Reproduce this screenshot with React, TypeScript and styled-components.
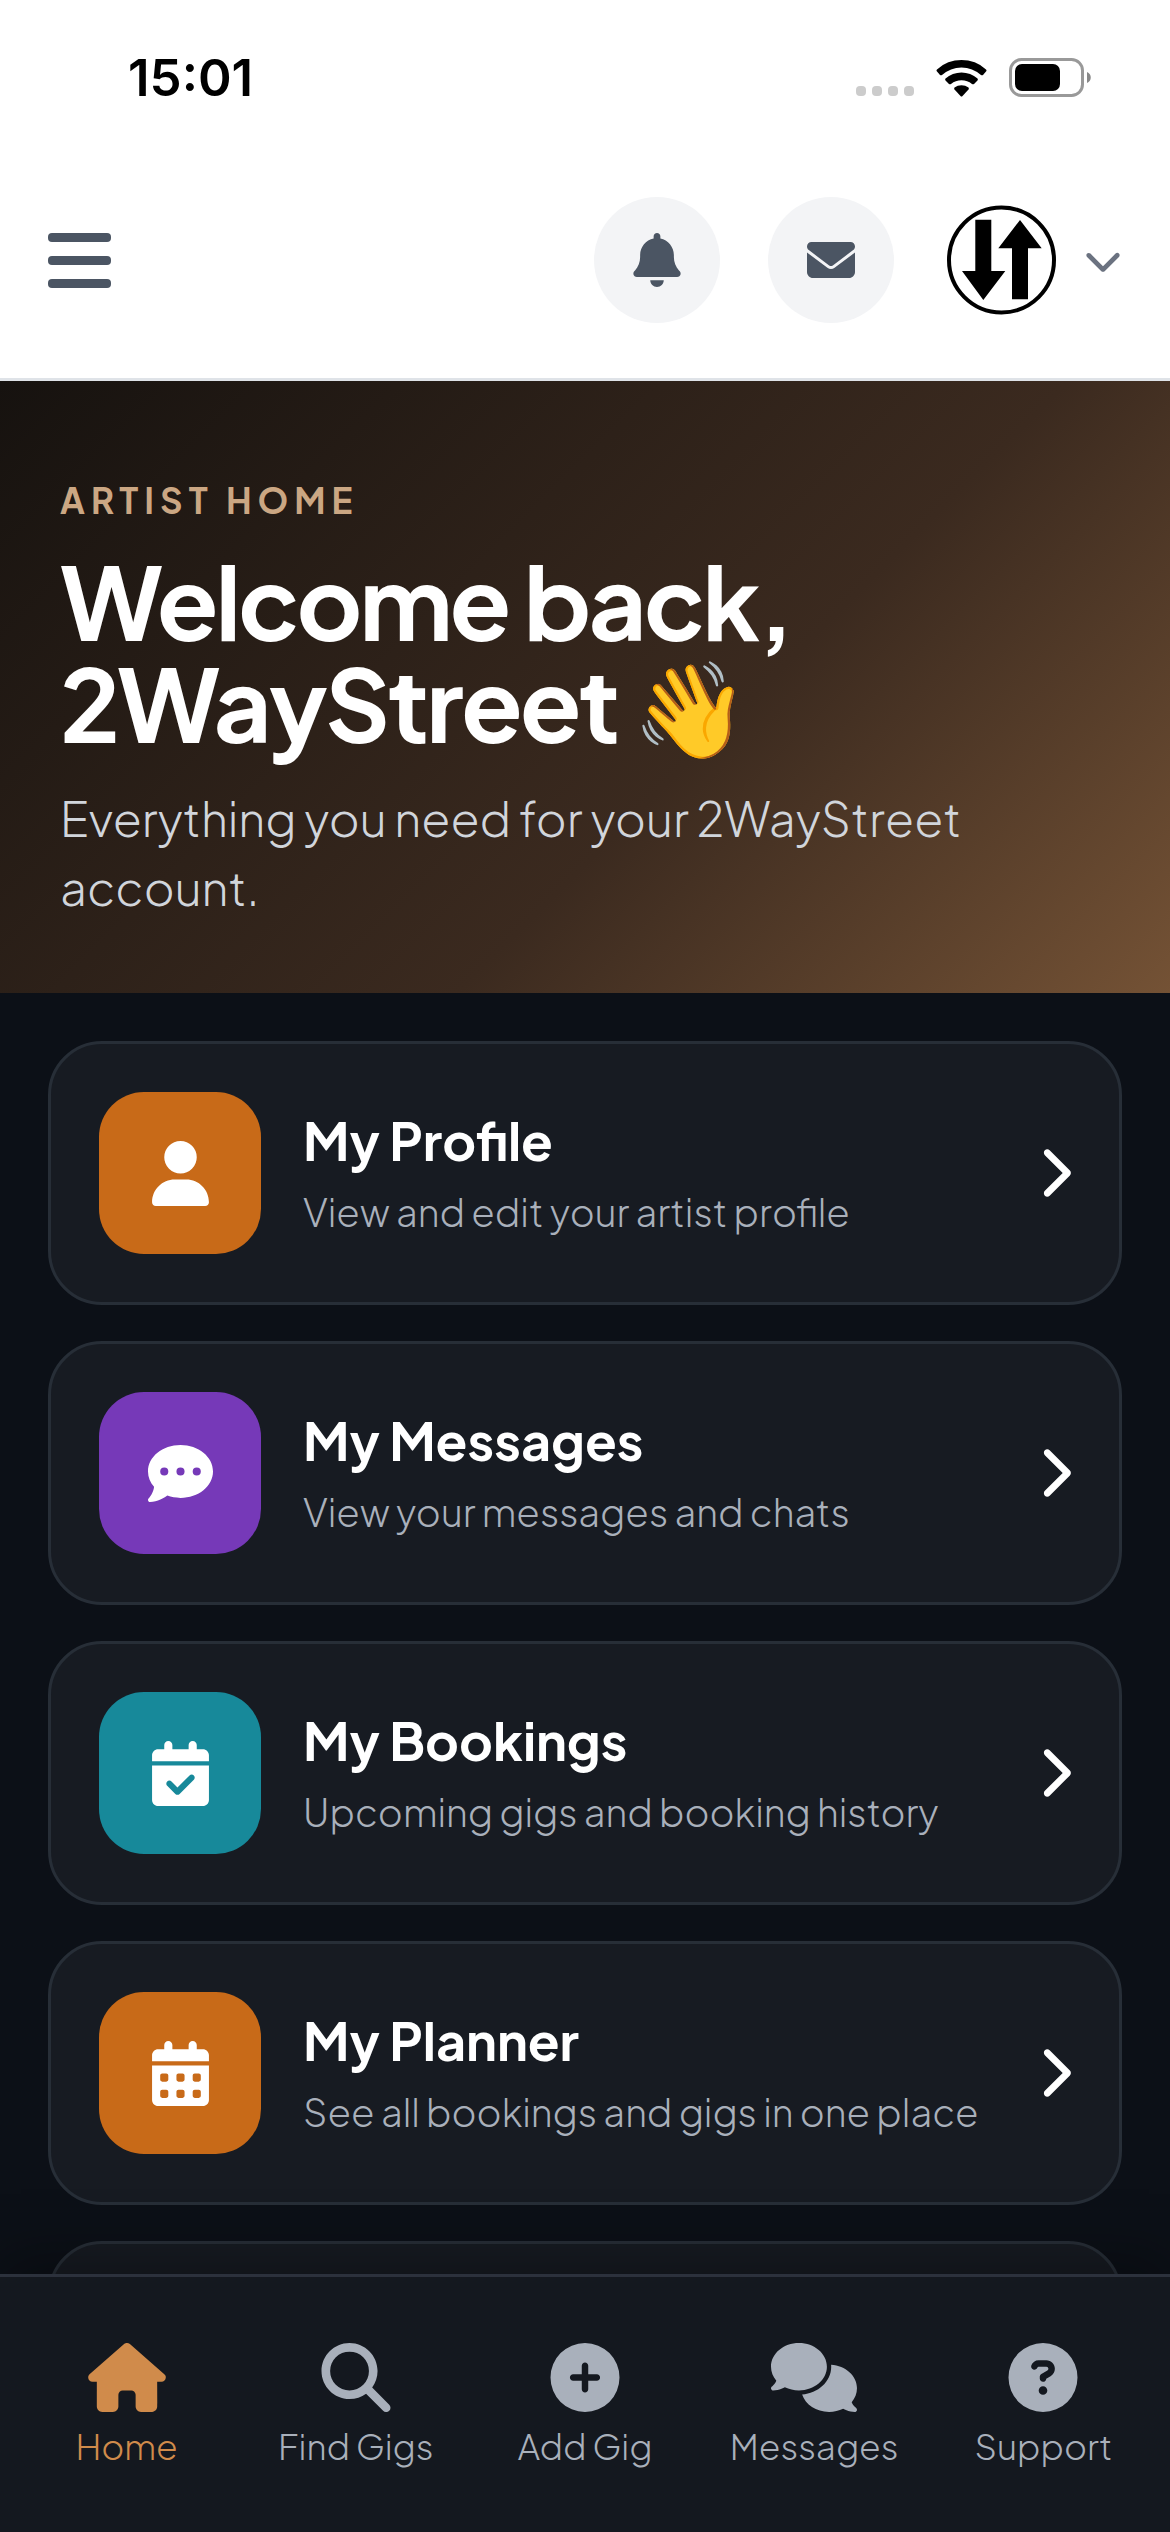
import React from "react";
import styled, { createGlobalStyle } from "styled-components";
import {
  FaBell, FaEnvelope, FaChevronDown, FaChevronRight, FaUser, FaCommentDots,
  FaCalendarCheck, FaCalendarDays, FaHouse, FaMagnifyingGlass, FaCirclePlus,
  FaComments, FaCircleQuestion, FaMusic,
} from "react-icons/fa6";

const GlobalStyle = createGlobalStyle`
  *, *::before, *::after { box-sizing: border-box; }
  body { margin: 0; background: #0c1017; font-family: "Plus Jakarta Sans", Inter, "Noto Sans", sans-serif; }
  h1, h2, p { margin: 0; }
  button { border: 0; padding: 0; font: inherit; cursor: pointer; }
  a { color: inherit; text-decoration: none; }
`;

const Screen = styled.div`
  display: flex;
  flex-direction: column;
  height: 100vh;
  overflow: hidden;
`;

const StatusBar = styled.div`
  flex: none;
  display: flex;
  align-items: center;
  justify-content: space-between;
  padding: 48px 78px 48px 128px;
  background: #fff;
  color: #000;
`;

const Time = styled.time`
  font-family: Inter, sans-serif;
  font-size: 51px;
  line-height: 60px;
  font-weight: 600;
`;

const StatusIcons = styled.div`
  display: flex;
  align-items: center;
  gap: 22px;
`;

const Header = styled.header`
  flex: none;
  display: flex;
  align-items: center;
  justify-content: space-between;
  padding: 41px 48px 55px;
  background: #fff;
  border-bottom: 3px solid #dfe3e8;
`;

const MenuButton = styled.button`
  display: flex;
  flex-direction: column;
  gap: 14px;
  background: transparent;
`;

const MenuBar = styled.span`
  width: 63px;
  height: 9px;
  border-radius: 4px;
  background: #4b5563;
`;

const Actions = styled.div`
  display: flex;
  align-items: center;
  gap: 48px;
`;

const RoundButton = styled.button`
  display: grid;
  place-items: center;
  width: 126px;
  height: 126px;
  border-radius: 50%;
  background: #f3f4f6;
  color: #4b5563;
`;

const AccountButton = styled.button`
  display: flex;
  align-items: center;
  gap: 26px;
  background: transparent;
  color: #6b7280;
`;

const Hero = styled.section`
  flex: none;
  padding: 98px 60px 72px;
  background: linear-gradient(135deg, #16120f 0%, #3b2a1f 60%, #745235 100%);
`;

const Eyebrow = styled.p`
  color: #cba783;
  font-size: 35px;
  line-height: 42px;
  font-weight: 700;
  letter-spacing: 6px;
`;

const Title = styled.h1`
  margin-top: 28px;
  color: #fff;
  font-size: 101px;
  line-height: 102px;
  font-weight: 700;
  letter-spacing: -3px;
`;

const Emoji = styled.span`
  font-size: 94px;
  line-height: 1;
`;

const Intro = styled.p`
  margin-top: 30px;
  color: #d1d5db;
  font-size: 47px;
  line-height: 69px;
  font-weight: 300;
`;

const List = styled.main`
  flex: 1;
  min-height: 0;
  overflow: hidden;
  display: flex;
  flex-direction: column;
  gap: 36px;
  padding: 48px 48px 0;
`;

const Card = styled.a`
  flex: none;
  display: flex;
  align-items: center;
  gap: 42px;
  padding: 48px;
  border: 3px solid #272e37;
  border-radius: 54px;
  background: #171b22;
  color: #fff;
`;

const Tile = styled.span<{ $color: string }>`
  flex: none;
  display: grid;
  place-items: center;
  width: 162px;
  height: 162px;
  border-radius: 45px;
  background: ${(p) => p.$color};
  font-size: 65px;
`;

const CardText = styled.div`
  flex: 1;
  min-width: 0;
`;

const CardTitle = styled.h2`
  font-size: 52px;
  line-height: 66px;
  font-weight: 700;
`;

const CardNote = styled.p`
  margin-top: 12px;
  color: #a9b0bb;
  font-size: 38px;
  line-height: 54px;
  font-weight: 300;
`;

const CardArrow = styled(FaChevronRight)`
  flex: none;
  width: 34px;
  height: 54px;
`;

const TabBar = styled.nav`
  flex: none;
  position: relative;
  display: grid;
  grid-template-columns: repeat(5, 1fr);
  padding: 66px 12px 62px;
  border-top: 3px solid #2c313c;
  background: #14181f;
  box-shadow: 0 -12px 60px rgba(0, 0, 0, 0.35);
`;

const Tab = styled.a<{ $active?: boolean }>`
  display: flex;
  flex-direction: column;
  align-items: center;
  gap: 10px;
  color: ${(p) => (p.$active ? "#d08b4b" : "#a9b0bb")};
  font-size: 35px;
  line-height: 48px;
  font-weight: 300;

  svg {
    width: 86px;
    height: 69px;
  }
`;

const cards = [
  { title: "My Profile", note: "View and edit your artist profile", color: "#c86a18", Icon: FaUser },
  { title: "My Messages", note: "View your messages and chats", color: "#7639b8", Icon: FaCommentDots },
  { title: "My Bookings", note: "Upcoming gigs and booking history", color: "#17899a", Icon: FaCalendarCheck },
  { title: "My Planner", note: "See all bookings and gigs in one place", color: "#c86a18", Icon: FaCalendarDays },
];

const tabs = [
  { label: "Home", Icon: FaHouse, active: true },
  { label: "Find Gigs", Icon: FaMagnifyingGlass },
  { label: "Add Gig", Icon: FaCirclePlus },
  { label: "Messages", Icon: FaComments },
  { label: "Support", Icon: FaCircleQuestion },
];

export default function App() {
  return (
    <Screen>
      <GlobalStyle />
      <StatusBar>
        <Time>15:01</Time>
        <StatusIcons>
          <svg width="59" height="40" viewBox="0 0 59 40" fill="#ccc" aria-hidden="true">
            {[1, 17, 33, 49].map((x) => (
              <rect key={x} x={x} y="28" width="10" height="10" rx="4" />
            ))}
          </svg>
          <svg width="51" height="38" viewBox="0 0 51 38" aria-hidden="true">
            <path d="M1 10.500a36 36 0 0 1 49 0q1 1 0 2l-3 3.500q-1 .5-2 0a29 29 0 0 0-39 0q-1 .5-2 0l-3-3.500q-1-1 0-2z" />
            <path d="M9.500 19.500a24 24 0 0 1 32 0q.8 1 0 2l-3.500 3.500q-1 .6-2 0a16.500 16.500 0 0 0-21 0q-1 .6-2 0l-3.500-3.500q-.8-1 0-2z" />
            <path d="M18.500 28.500a12 12 0 0 1 14 0q.8 1 0 2L26.500 37q-1 1-2 0l-6-6.500q-.8-1 0-2z" />
          </svg>
          <svg width="83" height="40" viewBox="0 0 83 40" aria-hidden="true">
            <rect x="1.500" y="1.500" width="72" height="36" rx="11" fill="none" stroke="#999" strokeWidth="3" />
            <rect x="6" y="6" width="45" height="27" rx="7" />
            <path d="M78 14c5 2 5 9 0 11z" fill="#888" />
          </svg>
        </StatusIcons>
      </StatusBar>
      <Header>
        <MenuButton aria-label="Open menu">
          <MenuBar />
          <MenuBar />
          <MenuBar />
        </MenuButton>
        <Actions>
          <RoundButton aria-label="Notifications"><FaBell size={54} /></RoundButton>
          <RoundButton aria-label="Inbox"><FaEnvelope size={48} /></RoundButton>
          <AccountButton aria-label="Account menu">
            <svg width="116" height="116" viewBox="0 0 116 116" fill="#000" aria-hidden="true">
              <circle cx="59.500" cy="58" r="52.500" fill="#fff" stroke="#000" strokeWidth="4" />
              <path d="M33.300 17.700h16V69h14L41.300 98 20 69h13.300z" />
              <path d="M70 97.300v-51H56.300L78 18l21.700 28.300H86v51z" />
            </svg>
            <FaChevronDown size={38} />
          </AccountButton>
        </Actions>
      </Header>
      <Hero>
        <Eyebrow>ARTIST HOME</Eyebrow>
        <Title>Welcome back, 2WayStreet <Emoji>👋</Emoji></Title>
        <Intro>Everything you need for your 2WayStreet account.</Intro>
      </Hero>
      <List>
        {cards.map(({ title, note, color, Icon }) => (
          <Card href="#" key={title}>
            <Tile $color={color}><Icon /></Tile>
            <CardText>
              <CardTitle>{title}</CardTitle>
              <CardNote>{note}</CardNote>
            </CardText>
            <CardArrow />
          </Card>
        ))}
        <Card href="#" aria-label="My Music"><Tile $color="#7639b8"><FaMusic /></Tile></Card>
      </List>
      <TabBar>
        {tabs.map(({ label, Icon, active }) => (
          <Tab href="#" key={label} $active={active}>
            <Icon />
            {label}
          </Tab>
        ))}
      </TabBar>
    </Screen>
  );
}
